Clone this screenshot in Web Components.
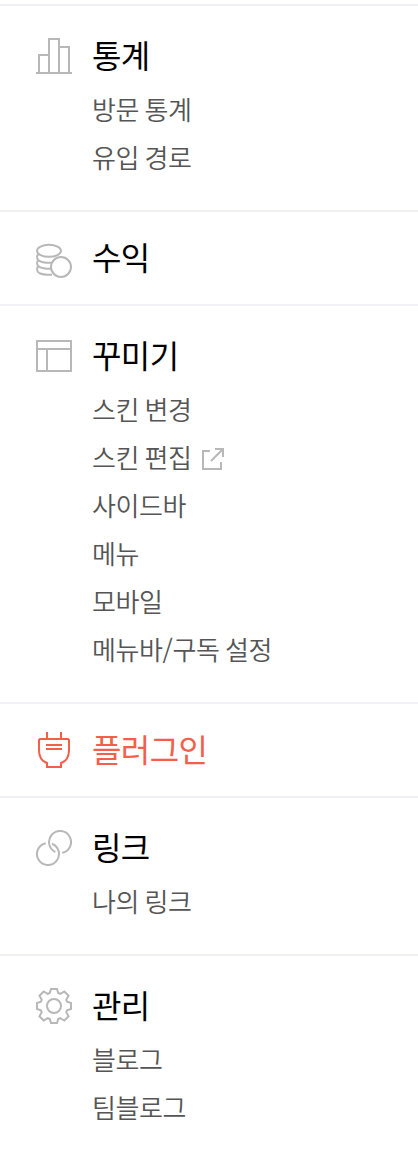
<!DOCTYPE html>
<html lang="ko">
<head>
<meta charset="utf-8">
<title>블로그 관리</title>
<style>
  body {
    margin: 0;
    background: #fff;
    font-family: "Noto Sans CJK KR", sans-serif;
  }
</style>
</head>
<body>
<side-menu>
  <menu-section icon="stats" label="통계">
    <menu-item>방문 통계</menu-item>
    <menu-item>유입 경로</menu-item>
  </menu-section>
  <menu-section icon="coins" label="수익" single></menu-section>
  <menu-section icon="layout" label="꾸미기">
    <menu-item>스킨 변경</menu-item>
    <menu-item external>스킨 편집</menu-item>
    <menu-item>사이드바</menu-item>
    <menu-item>메뉴</menu-item>
    <menu-item>모바일</menu-item>
    <menu-item>메뉴바/구독 설정</menu-item>
  </menu-section>
  <menu-section icon="plug" label="플러그인" single active></menu-section>
  <menu-section icon="link" label="링크">
    <menu-item>나의 링크</menu-item>
  </menu-section>
  <menu-section icon="gear" label="관리">
    <menu-item>블로그</menu-item>
    <menu-item>팀블로그</menu-item>
  </menu-section>
</side-menu>

<script>
const icons = {
  stats: '<path d="M0 37H36M3 37V19H13M13 37V3H23V37M23 11H33V37"/>',
  coins: `<ellipse cx="13" cy="12.8" rx="12" ry="6"/>
    <circle cx="25" cy="29" r="10"/>
    <path d="M2.5 16C.5 18 .5 21 3 22.6C5.5 24.3 9 24.8 13 24.8H16M2.5 22C.5 24 .5 27 3 28.6C5.5 30.3 9 30.8 15 30.8M2.5 28C.5 30 .5 33 3 34.8C5.5 36.5 9 36.8 16 36.8"/>`,
  layout: '<path d="M1 5H35V35H1ZM1 13H35M11 13V35"/>',
  plug: '<path d="M11 2V9M25 2V9M4 9H32L33 10V20C33 27 30 31.5 25 33V37H11V33C6 31.5 3 27 3 20V10ZM10 15H26M10 19H26"/>',
  link: '<path d="M16 15.75A11 11 0 1 1 9.8 15.2M19.4 24A11 11 0 1 1 26.2 24.8"/>',
  gear: ''
};

// eight teeth around the centre, the diagonal ones slightly longer
const points = [];
for (let i = 0; i < 8; i++) {
  const a = i * Math.PI / 4;
  const top = i % 2 ? -17.6 : -17;
  const tooth = [[-4.2, -13.1], [-3, top], [3, top], [4.2, -13.1]];
  tooth.forEach(([x, y]) => {
    points.push([
      (18 + x * Math.cos(a) - y * Math.sin(a)).toFixed(2),
      (20 + x * Math.sin(a) + y * Math.cos(a)).toFixed(2)
    ].join(','));
  });
}
icons.gear = `<polygon points="${points.join(' ')}"/><circle cx="18" cy="20" r="7"/>`;

class MenuIcon extends HTMLElement {
  constructor() {
    super();
    this.attachShadow({ mode: 'open' });
  }

  connectedCallback() {
    this.shadowRoot.innerHTML = `
      <style>
        :host {
          display: block;
          flex: none;
          width: 36px;
          height: 40px;
        }

        svg {
          display: block;
          fill: none;
          stroke: currentColor;
          stroke-width: 2;
        }
      </style>
      <svg width="36" height="40" viewBox="0 0 36 40">${icons[this.getAttribute('name')]}</svg>
    `;
  }
}

class MenuItem extends HTMLElement {
  constructor() {
    super();
    this.attachShadow({ mode: 'open' });
  }

  connectedCallback() {
    const external = this.hasAttribute('external')
      ? '<svg width="22" height="22" viewBox="0 0 22 22"><path d="M8 3H1V21H19V14M13 1H21V9M21 1L9 13"/></svg>'
      : '';
    this.shadowRoot.innerHTML = `
      <style>
        :host {
          display: flex;
          align-items: center;
          gap: 10px;
          height: 48px;
          color: #555;
          font-size: 26px;
          font-weight: 350;
          line-height: 46px;
          letter-spacing: -0.4px;
          word-spacing: -1.4px;
        }

        span {
          height: 48px;
        }

        svg {
          margin-top: 2px;
          fill: none;
          stroke: #b8b8b8;
          stroke-width: 2;
        }
      </style>
      <span><slot></slot></span>${external}
    `;
  }
}

class MenuSection extends HTMLElement {
  constructor() {
    super();
    this.attachShadow({ mode: 'open' });
  }

  connectedCallback() {
    this.shadowRoot.innerHTML = `
      <style>
        :host {
          display: block;
          padding: 26px 36px 28px;
          border-top: 2px solid #f1f1f5;
        }

        :host([single]) {
          padding: 22px 36px;
        }

        .head {
          display: flex;
          align-items: center;
          gap: 20px;
          height: 48px;
        }

        menu-icon {
          color: #b8b8b8;
        }

        .label {
          height: 48px;
          color: #000;
          font-size: 32px;
          font-weight: 400;
          line-height: 44px;
          letter-spacing: -0.6px;
        }

        :host([active]) menu-icon,
        :host([active]) .label {
          color: #f2604c;
        }

        .items {
          padding: 6px 0 0 56px;
        }

        :host([single]) .items {
          display: none;
        }
      </style>
      <div class="head">
        <menu-icon name="${this.getAttribute('icon')}"></menu-icon>
        <span class="label">${this.getAttribute('label')}</span>
      </div>
      <div class="items"><slot></slot></div>
    `;
  }
}

class SideMenu extends HTMLElement {
  constructor() {
    super();
    this.attachShadow({ mode: 'open' }).innerHTML = `
      <style>
        :host {
          display: block;
          box-sizing: border-box;
          height: 1152px;
          padding-top: 4px;
          overflow: hidden;
        }
      </style>
      <slot></slot>
    `;
  }
}

customElements.define('menu-icon', MenuIcon);
customElements.define('menu-item', MenuItem);
customElements.define('menu-section', MenuSection);
customElements.define('side-menu', SideMenu);
</script>
</body>
</html>
